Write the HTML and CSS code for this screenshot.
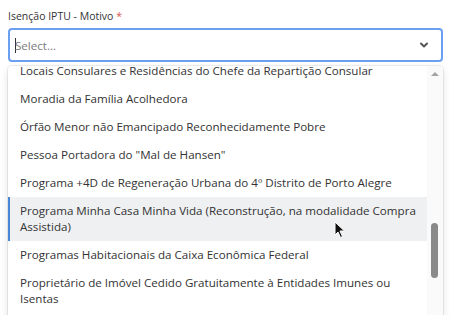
FILE: index.html
```html
<!DOCTYPE html>
<html lang="pt-BR">
<head>
    <meta charset="UTF-8">
    <title>Isenção IPTU</title>
    <link rel="stylesheet" href="styles.css">
</head>
<body>
    <div class="field">
        <label class="field-label">Isenção IPTU - Motivo <span class="required">*</span></label>

        <div class="select-control">
            <span class="select-placeholder"><span class="caret"></span>Select...</span>
            <svg class="select-arrow" width="10" height="8" viewBox="0 0 10 8">
                <path d="M2 2.5 L5 5.5 L8 2.5" fill="none" stroke="#555" stroke-width="2" stroke-linecap="round" stroke-linejoin="round"/>
            </svg>
        </div>

        <div class="select-menu">
            <div class="menu-list">
                <div class="option">Locais Consulares e Residências do Chefe da Repartição Consular</div>
                <div class="option">Moradia da Família Acolhedora</div>
                <div class="option">Órfão Menor não Emancipado Reconhecidamente Pobre</div>
                <div class="option">Pessoa Portadora do "Mal de Hansen"</div>
                <div class="option">Programa +4D de Regeneração Urbana do 4º Distrito de Porto Alegre</div>
                <div class="option focused">Programa Minha Casa Minha Vida (Reconstrução, na modalidade Compra Assistida)</div>
                <div class="option">Programas Habitacionais da Caixa Econômica Federal</div>
                <div class="option">Proprietário de Imóvel Cedido Gratuitamente à Entidades Imunes ou Isentas</div>
            </div>
            <div class="scrollbar">
                <span class="scroll-up"></span>
                <span class="scroll-thumb"></span>
            </div>
            <svg class="pointer" width="12" height="18" viewBox="0 0 12 18">
                <path d="M1 1 L1 14 L4 11 L6.5 16.5 L8.5 15.5 L6 10 L10.5 10 Z" fill="#111" stroke="#fff" stroke-width="1"/>
            </svg>
        </div>
    </div>
</body>
</html>
```

FILE: styles.css
```css
/* Select field */
body {
    margin: 0;
    font-family: "Open Sans", "Noto Sans", Arial, sans-serif;
    background-color: #ffffff;
    color: #333333;
    overflow: hidden;
}

.field {
    padding: 8px 8px 0 8px;
    width: 435px;
}

.field-label {
    display: block;
    font-size: 10.5px;
    line-height: 16px;
    color: #333333;
    margin-bottom: 4px;
}

.required {
    color: #d9534f;
}

.select-control {
    height: 30px;
    border: 2px solid #6b9ff0;
    border-radius: 4px;
    display: flex;
    align-items: center;
    justify-content: space-between;
    padding: 0 12px 0 5px;
}

.select-placeholder {
    font-size: 11.6px;
    color: #7a7a7a;
    display: flex;
    align-items: center;
}

.caret {
    width: 1px;
    height: 15px;
    background-color: #333333;
    margin-right: -1px;
}

.select-menu {
    position: relative;
    margin-top: 4px;
    height: 260px;
    overflow: hidden;
    display: flex;
    background-color: #ffffff;
    box-shadow: 0 0 0 1px rgba(0, 0, 0, 0.06), 0 3px 8px rgba(0, 0, 0, 0.12);
    border-radius: 4px 4px 0 0;
}

.menu-list {
    flex: 1;
    margin-top: -9px;
}

.option {
    font-size: 11.6px;
    line-height: 16px;
    padding: 6px 10px 6px 10px;
    color: #333333;
    border-left: 2px solid transparent;
}

.option.focused {
    background-color: #eff0f2;
    border-left-color: #4a86d8;
}

.scrollbar {
    position: relative;
    width: 16px;
    background-color: #fafafa;
}

.scroll-up {
    position: absolute;
    top: 6px;
    left: 4px;
    border-left: 4px solid transparent;
    border-right: 4px solid transparent;
    border-bottom: 4px solid #a3a3a3;
}

.scroll-thumb {
    position: absolute;
    top: 157px;
    left: 4px;
    width: 7px;
    height: 55px;
    border-radius: 4px;
    background-color: #8a8a8a;
}

.pointer {
    position: absolute;
    top: 155px;
    left: 326px;
}
```
